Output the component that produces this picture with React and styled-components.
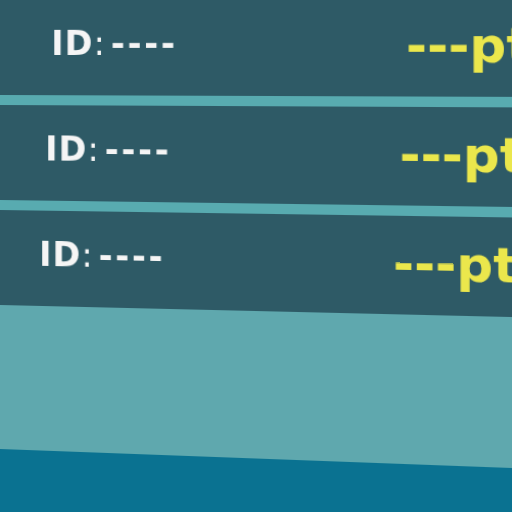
import React from "react";
import styled, { createGlobalStyle } from "styled-components";

const Global = createGlobalStyle`
  html, body {
    margin: 0;
    padding: 0;
    width: 512px;
    height: 512px;
    overflow: hidden;
    background: #0a7291;
  }
  #root { width: 512px; height: 512px; overflow: hidden; }
`;

const Stage = styled.div`
  width: 600px;
  display: flex;
  flex-direction: column;
  transform-origin: 0 0;
  transform: matrix3d(1, -0.0053, 0, -0.0000945, 0, 1, 0, 0, 0, 0, 1, 0, 0, 0, 0, 1);
`;

const Row = styled.div`
  height: 95px;
  background: #2e5a66;
  display: grid;
  grid-template-columns: 340px auto;
  align-items: center;
  padding-left: ${(p) => p.$indent}px;
  box-sizing: border-box;
`;

const Divider = styled.div`
  height: 10px;
  background: #58abb0;
`;

const Id = styled.div`
  font-family: "DejaVu Sans", sans-serif;
  font-size: 33px;
  color: #f5f5f5;
  line-height: 1;
  white-space: nowrap;
  margin-top: -9px;
`;

const Label = styled.span`
  font-weight: 700;
  letter-spacing: 1px;
`;

const Colon = styled.span`
  font-weight: 400;
`;

const Dashes = styled.span`
  font-weight: 700;
  letter-spacing: 2.5px;
  margin-left: 6px;
`;

const Score = styled.div`
  font-family: "DejaVu Sans", sans-serif;
  font-weight: 700;
  font-size: 47px;
  color: #ebe74c;
  line-height: 1;
  white-space: nowrap;
  margin-top: -4px;
`;

const Band = styled.div`
  height: 144px;
  background: #5fa8ae;
`;

const Floor = styled.div`
  height: 140px;
  background: #0a7291;
`;

const rows = [
  { id: 1, indent: 51 },
  { id: 2, indent: 45 },
  { id: 3, indent: 39 },
];

export default function App() {
  return (
    <>
      <Global />
      <Stage>
        {rows.map((r, i) => (
          <React.Fragment key={r.id}>
            {i > 0 && <Divider />}
            <Row $indent={r.indent}>
              <Id>
                <Label>ID</Label>
                <Colon>:</Colon>
                <Dashes>----</Dashes>
              </Id>
              <Score>---pt</Score>
            </Row>
          </React.Fragment>
        ))}
        <Band />
        <Floor />
      </Stage>
    </>
  );
}
